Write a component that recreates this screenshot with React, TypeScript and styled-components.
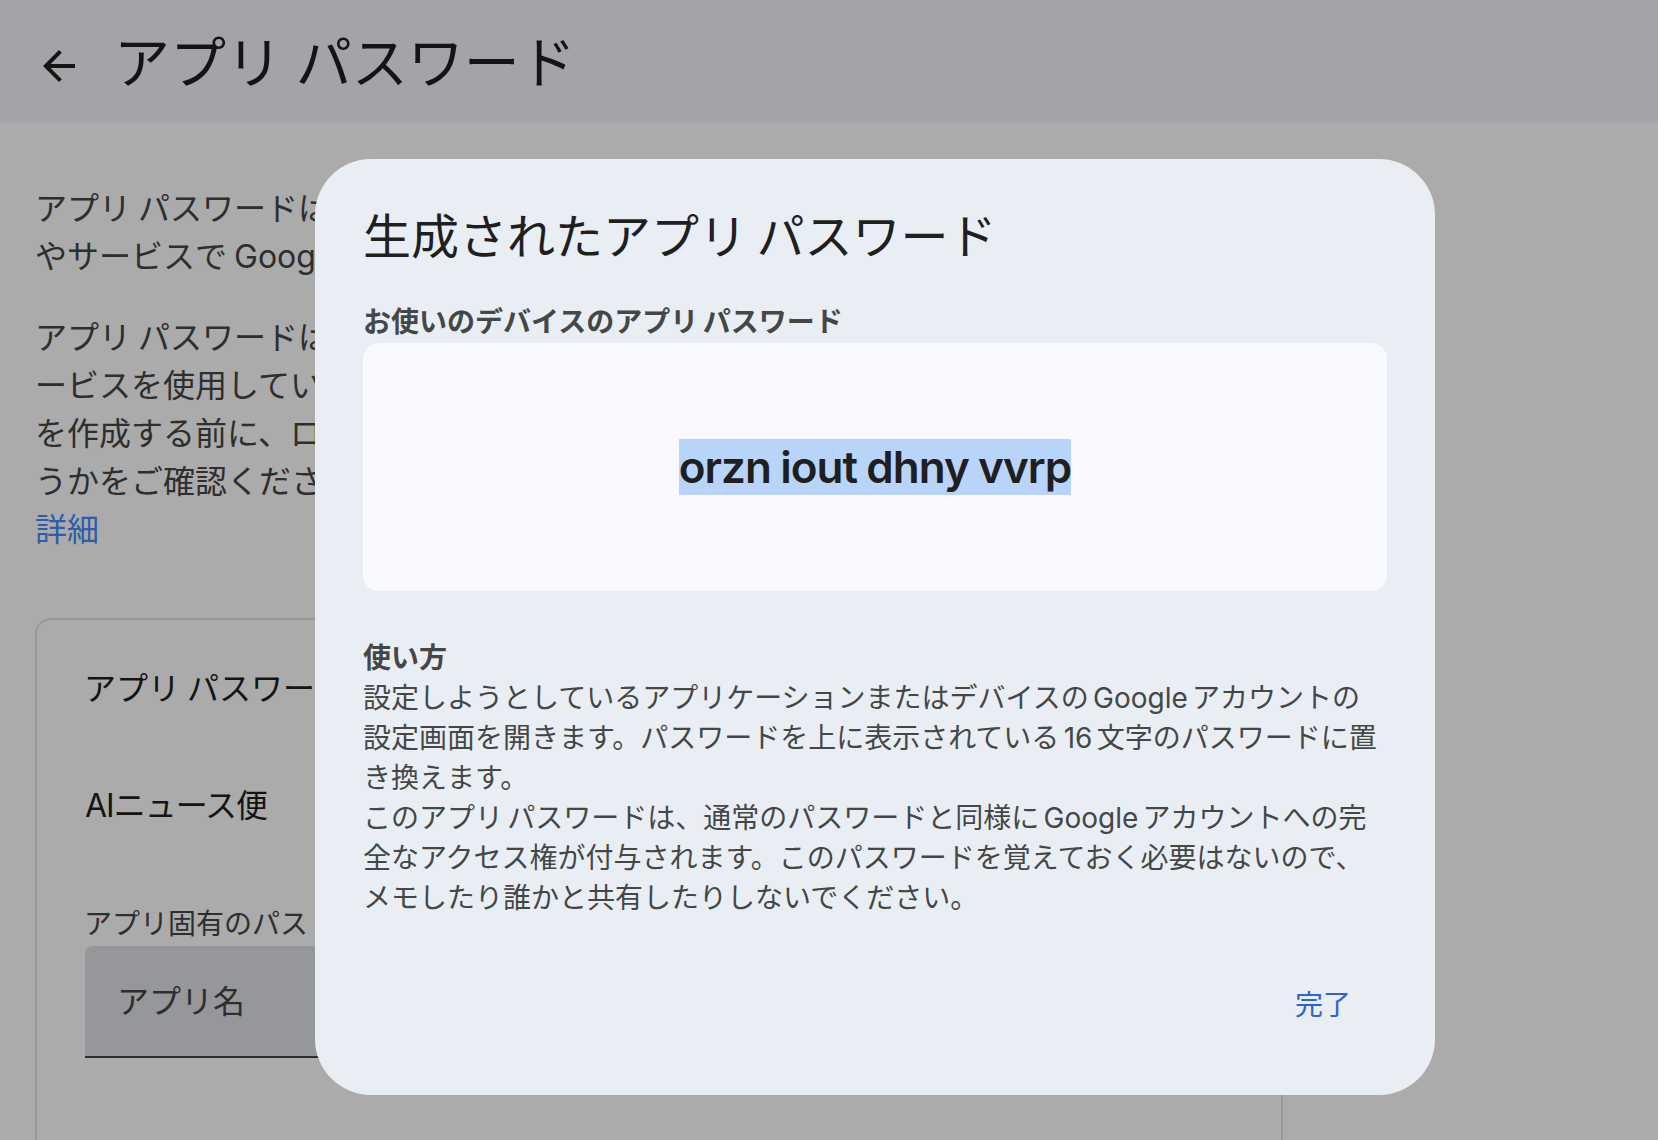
import React from "react";
import styled, { createGlobalStyle } from "styled-components";

const GlobalStyle = createGlobalStyle`
  html, body {
    margin: 0;
    padding: 0;
    height: 100%;
    background: #ffffff;
    overflow: hidden;
  }
  * {
    box-sizing: border-box;
  }
  body {
    font-family: "Inter", "Noto Sans CJK JP", sans-serif;
    color: #1f1f1f;
    word-spacing: -2px;
  }
`;

const howToLines = [
  "設定しようとしているアプリケーションまたはデバイスの Google アカウントの",
  "設定画面を開きます。パスワードを上に表示されている 16 文字のパスワードに置",
  "き換えます。",
  "このアプリ パスワードは、通常のパスワードと同様に Google アカウントへの完",
  "全なアクセス権が付与されます。このパスワードを覚えておく必要はないので、",
  "メモしたり誰かと共有したりしないでください。",
];

const App = () => {
  return (
    <Page>
      <GlobalStyle />
      <Header>
        <BackIcon viewBox="0 0 24 24">
          <path d="M20 11H7.83l5.59-5.59L12 4l-8 8 8 8 1.41-1.41L7.83 13H20v-2z" />
        </BackIcon>
        <HeaderTitle>アプリ パスワード</HeaderTitle>
      </Header>
      <Main>
        <Paragraph>
          アプリ パスワードは
          <br />
          やサービスで Google
        </Paragraph>
        <Paragraph>
          アプリ パスワードは
          <br />
          ービスを使用してい
          <br />
          を作成する前に、ロ
          <br />
          うかをご確認くださ
          <br />
          <LearnMore>詳細</LearnMore>
        </Paragraph>
        <Card>
          <CardTitle>アプリ パスワード</CardTitle>
          <AppName>AIニュース便</AppName>
          <FieldLabel>アプリ固有のパス</FieldLabel>
          <FieldBox>アプリ名</FieldBox>
        </Card>
      </Main>
      <Scrim>
        <Dialog>
          <DialogTitle>生成されたアプリ パスワード</DialogTitle>
          <BoldLabel>お使いのデバイスのアプリ パスワード</BoldLabel>
          <PasswordBox>
            <PasswordText>orzn iout dhny vvrp</PasswordText>
          </PasswordBox>
          <HowToTitle>使い方</HowToTitle>
          {howToLines.map((line) => (
            <HowToLine key={line}>{line}</HowToLine>
          ))}
          <Footer>
            <DoneButton>完了</DoneButton>
          </Footer>
        </Dialog>
      </Scrim>
    </Page>
  );
};

export default App;

const Page = styled.div`
  position: relative;
  width: 1658px;
  height: 1140px;
  overflow: hidden;
  background: #ffffff;
`;

const Header = styled.header`
  display: flex;
  align-items: center;
  height: 122px;
  padding: 9px 0 0 35px;
  background: #f3f5fa;
`;

const BackIcon = styled.svg`
  width: 48px;
  height: 48px;
  fill: #1f1f1f;
  flex-shrink: 0;
`;

const HeaderTitle = styled.h1`
  margin: -5px 0 0 31px;
  font-size: 56px;
  line-height: 72px;
  font-weight: 400;
  word-spacing: -2px;
  color: #1f1f1f;
`;

const Main = styled.main`
  padding: 63px 0 0 35px;
`;

const Paragraph = styled.p`
  margin: 0 0 33px;
  width: 1246px;
  font-size: 32px;
  line-height: 48px;
  color: #444746;
`;

const LearnMore = styled.a`
  color: #458bfc;
`;

const Card = styled.section`
  width: 1248px;
  height: 640px;
  margin-top: 64px;
  padding: 45px 48px 0;
  border: 2px solid #e3e3e3;
  border-radius: 16px;
`;

const CardTitle = styled.div`
  margin-left: -1px;
  font-size: 32px;
  line-height: 48px;
  color: #1f1f1f;
`;

const AppName = styled.div`
  margin-top: 69px;
  font-size: 32px;
  line-height: 48px;
  letter-spacing: -1px;
  color: #1f1f1f;
`;

const FieldLabel = styled.div`
  margin: 76px 0 0 -1px;
  font-size: 28px;
  line-height: 36px;
  color: #444746;
`;

const FieldBox = styled.div`
  display: flex;
  align-items: center;
  height: 112px;
  margin-top: 4px;
  padding: 0 32px 4px;
  background: #dee1e7;
  border-bottom: 2px solid #444746;
  border-radius: 8px 8px 0 0;
  font-size: 32px;
  color: #444746;
`;

const Scrim = styled.div`
  position: absolute;
  inset: 0;
  background: rgba(0, 0, 0, 0.33);
`;

const Dialog = styled.div`
  position: absolute;
  left: 315px;
  top: 159px;
  width: 1120px;
  height: 936px;
  padding: 46px 48px 0;
  background: #e9eef5;
  border-radius: 56px;
`;

const DialogTitle = styled.h2`
  margin: 0;
  font-size: 48px;
  line-height: 64px;
  font-weight: 400;
  word-spacing: -4px;
  color: #1f1f1f;
`;

const BoldLabel = styled.div`
  margin-top: 35px;
  font-size: 28px;
  line-height: 36px;
  font-weight: 700;
  color: #444746;
`;

const PasswordBox = styled.div`
  display: flex;
  align-items: center;
  justify-content: center;
  height: 248px;
  margin-top: 3px;
  background: #f8faff;
  border-radius: 16px;
`;

const PasswordText = styled.span`
  background: #b8d4f9;
  font-family: "Inter", sans-serif;
  font-size: 44px;
  line-height: 56px;
  font-weight: 620;
  letter-spacing: -0.95px;
  word-spacing: -1px;
  color: #1f1f1f;
`;

const HowToTitle = styled.div`
  margin-top: 48px;
  font-size: 28px;
  line-height: 39px;
  font-weight: 700;
  color: #444746;
`;

const HowToLine = styled.div`
  font-size: 28px;
  line-height: 40px;
  word-spacing: -3.6px;
  color: #444746;
  white-space: nowrap;
`;

const Footer = styled.div`
  display: flex;
  justify-content: flex-end;
  margin-top: 69px;
  padding-right: 36px;
`;

const DoneButton = styled.button`
  padding: 0;
  border: none;
  background: none;
  font: inherit;
  font-size: 28px;
  line-height: 36px;
  word-spacing: 0;
  color: #2d62d0;
  cursor: pointer;
`;
